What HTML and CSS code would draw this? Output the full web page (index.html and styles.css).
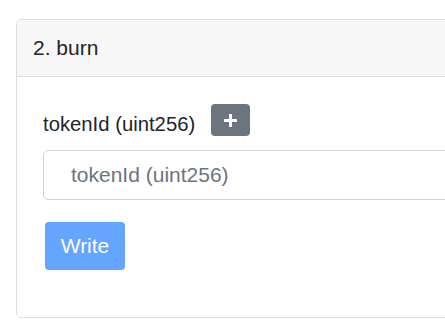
FILE: index.html
```html
<!DOCTYPE html>
<html>
<head>
<meta charset="utf-8">
<link rel="stylesheet" href="styles.css">
</head>
<body>
<div class="card">
  <div class="card-header">2. burn</div>
  <div class="card-body">
    <div class="label-row">
      <span class="label">tokenId (uint256)</span>
      <button class="btn-add" type="button" aria-label="add">
        <svg width="13" height="13" viewBox="0 0 13 13"><rect x="5" y="0" width="3" height="13" rx="0.6" fill="#fff"/><rect x="0" y="5" width="13" height="3" rx="0.6" fill="#fff"/></svg>
      </button>
    </div>
    <input class="field" type="text" placeholder="tokenId (uint256)">
    <button class="btn-write" type="button">Write</button>
  </div>
</div>
</body>
</html>
```
FILE: styles.css
```css
html, body {
  margin: 0;
  padding: 0;
  overflow: hidden;
  background: #ffffff;
}
body {
  font-family: "Liberation Sans", Arial, sans-serif;
  color: #212529;
}
.card {
  margin: 19px 0 0 16px;
  width: 520px;
  border: 1px solid #dedede;
  border-radius: 5px;
  overflow: hidden;
  background: #fff;
}
.card-header {
  background: #f7f7f7;
  border-bottom: 1px solid #dedede;
  padding: 16px 15px 16px 16px;
  font-size: 21px;
  line-height: 24px;
}
.card-body {
  padding: 27px 26px 47px 26px;
  display: flex;
  flex-direction: column;
  align-items: flex-start;
}
.label-row {
  display: flex;
  align-items: center;
  gap: 16px;
}
.label {
  font-size: 20.3px;
  line-height: 24px;
  padding-top: 7px;
}
.btn-add {
  width: 39px;
  height: 32px;
  border: none;
  border-radius: 4px;
  background: #6c757d;
  display: flex;
  align-items: center;
  justify-content: center;
  padding: 0;
}
.btn-add svg {
  display: block;
}
.field {
  margin-top: 14px;
  width: 460px;
  height: 50px;
  box-sizing: border-box;
  border: 1px solid #ced4da;
  border-radius: 5px;
  padding: 0 0 0 27px;
  font-family: "Liberation Sans", Arial, sans-serif;
  font-size: 21px;
  color: #495057;
  outline: none;
}
.field::placeholder {
  color: #6c757d;
}
.btn-write {
  margin: 22px 0 0 2px;
  width: 80px;
  height: 48px;
  border: none;
  border-radius: 4px;
  background: #63a5ff;
  color: #fff;
  font-family: "Liberation Sans", Arial, sans-serif;
  font-size: 21px;
  padding: 0;
}
```
